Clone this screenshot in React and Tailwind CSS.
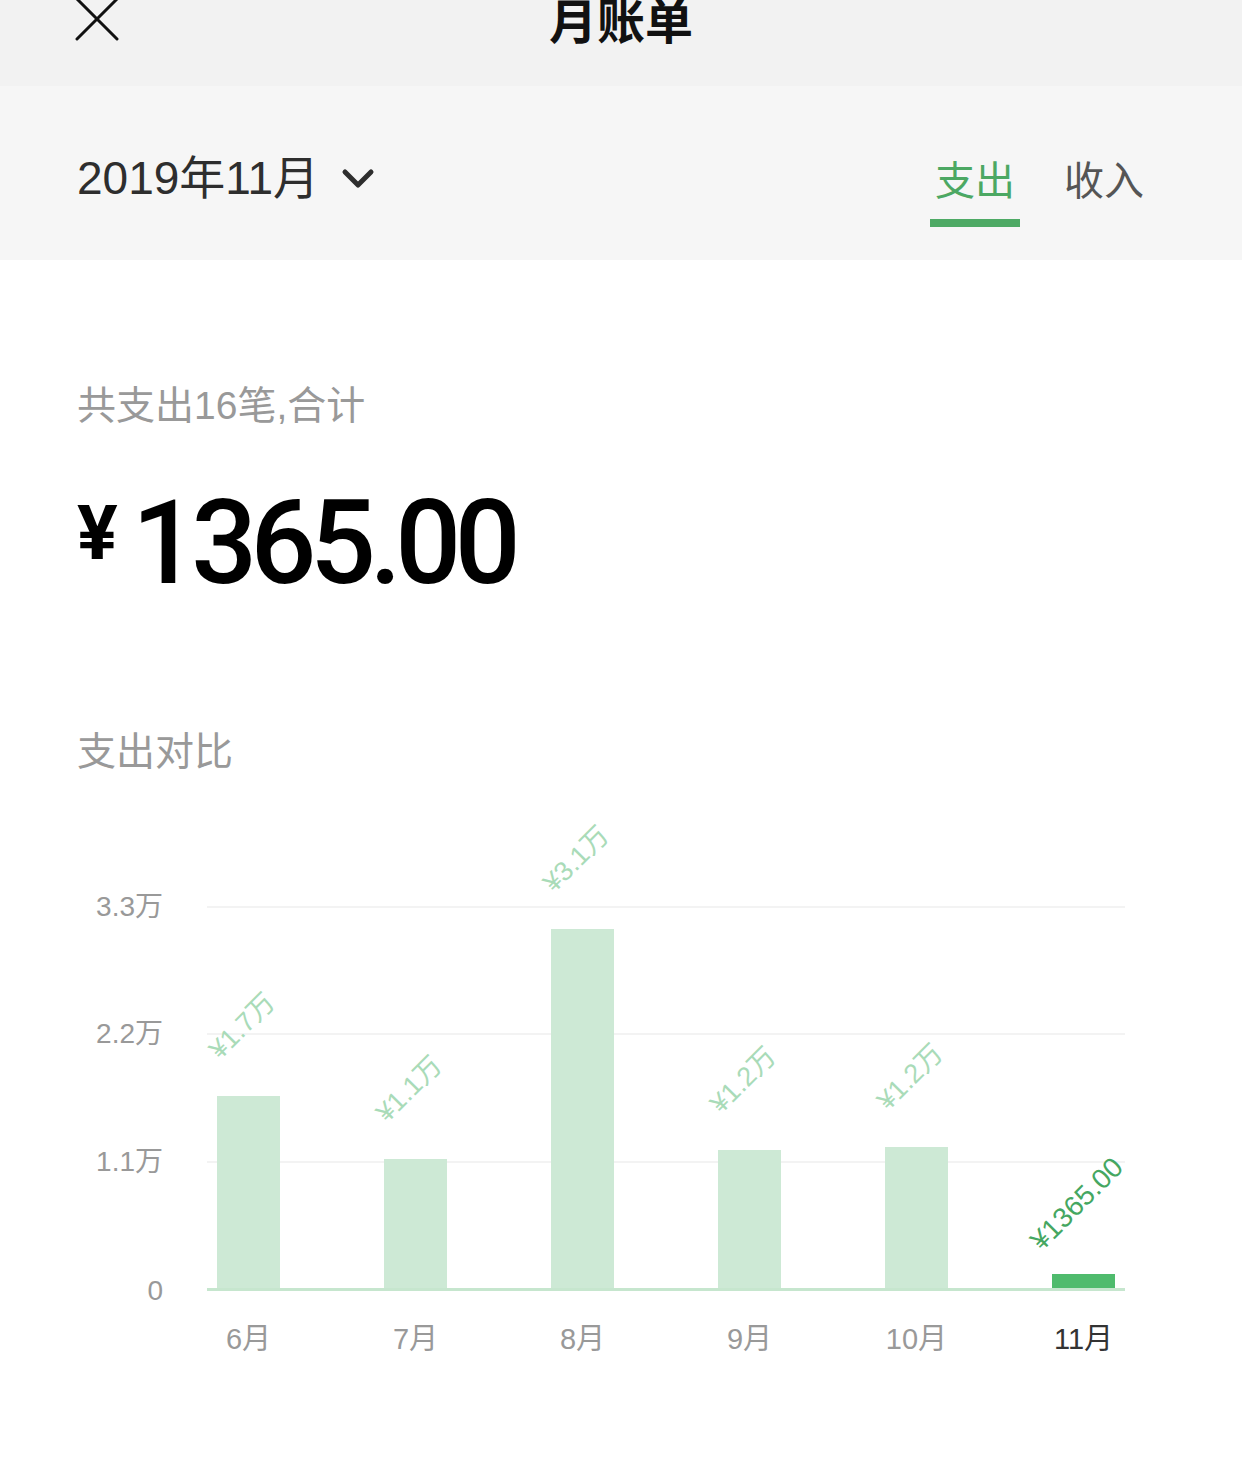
import React from "react";

const bars = [
  { m: "6月", left: 217, top: 322, label: "¥1.7万" },
  { m: "7月", left: 384, top: 385, label: "¥1.1万" },
  { m: "8月", left: 551, top: 155, label: "¥3.1万" },
  { m: "9月", left: 718, top: 376, label: "¥1.2万" },
  { m: "10月", left: 885, top: 373, label: "¥1.2万" },
  { m: "11月", left: 1052, top: 500, label: "¥1365.00", active: true },
];

const grid = [
  { y: 133, t: "3.3万" },
  { y: 260, t: "2.2万" },
  { y: 388, t: "1.1万" },
];

const BASE = 515;

export default function App() {
  const font = { fontFamily: '"Liberation Sans", "Noto Sans CJK SC", sans-serif' };
  return (
    <div className="w-[1242px] min-h-[1478px] bg-white overflow-hidden" style={font}>
      {/* top nav */}
      <div className="h-[86px] bg-[#f2f2f2] grid grid-cols-[1fr_auto_1fr] items-start">
        <div className="pl-[75px] -mt-[3px]">
          <svg width="44" height="44" viewBox="0 0 44 44" className="block">
            <path d="M2 2 L42 42 M42 2 L2 42" stroke="#111" strokeWidth="3" strokeLinecap="round" fill="none" />
          </svg>
        </div>
        <div className="text-[48px] leading-[40px] font-bold text-[#111] -mt-[2px]" style={{ fontFamily: '"Noto Sans CJK SC", sans-serif' }}>
          月账单
        </div>
        <div />
      </div>

      {/* filter bar */}
      <div className="h-[174px] bg-[#f6f6f6] flex items-start justify-between pl-[77px] pr-[93px] pt-[70px]">
        <div className="flex items-center gap-[22px]">
          <span className="text-[46px] leading-[44px] text-[#2e2e2e]">2019年11月</span>
          <svg width="34" height="24" viewBox="0 0 34 24" className="block mt-[2px]">
            <path d="M4 5 L17 18 L30 5" stroke="#2e2e2e" strokeWidth="5" fill="none" strokeLinecap="round" strokeLinejoin="round" />
          </svg>
        </div>
        <div className="flex gap-[39px]">
          <div className="w-[90px] flex flex-col items-center">
            <span className="text-[40px] leading-[44px] text-[#4ca863]" style={{ fontFamily: '"Noto Sans CJK SC", sans-serif' }}>支出</span>
            <div className="mt-[19px] w-[90px] h-[8px] bg-[#4eaa65]" />
          </div>
          <div className="w-[90px] flex flex-col items-center">
            <span className="text-[40px] leading-[44px] text-[#555]" style={{ fontFamily: '"Noto Sans CJK SC", sans-serif' }}>收入</span>
          </div>
        </div>
      </div>

      {/* summary */}
      <div className="pl-[77px]">
        <div className="mt-[124px] text-[39px] leading-[44px] text-[#999]">共支出16笔,合计</div>
        <div className="mt-[57px] flex items-start" style={{ fontFamily: 'Roboto, "Liberation Sans", sans-serif' }}>
          <span className="text-[76px] leading-[76px] font-bold text-black mt-[10px] mr-[14px]">¥</span>
          <span className="text-[116px] leading-[116px] font-medium text-black tracking-[-6.5px]">1365.00</span>
        </div>
        <div className="mt-[129px] text-[39px] leading-[44px] text-[#999]">支出对比</div>
      </div>

      {/* chart */}
      <div className="relative h-[620px]">
        {grid.map((g) => (
          <React.Fragment key={g.t}>
            <div className="absolute left-[207px] w-[918px] h-[2px] bg-[#f3f3f3]" style={{ top: g.y - 1 }} />
            <div className="absolute right-[1079px] text-[28px] leading-[30px] text-[#999] whitespace-nowrap" style={{ top: g.y - 15 }}>
              {g.t}
            </div>
          </React.Fragment>
        ))}
        <div className="absolute right-[1079px] text-[28px] leading-[30px] text-[#999]" style={{ top: BASE - 13 }}>
          0
        </div>
        {bars.map((b) => (
          <div
            key={b.m}
            className={`absolute w-[63px] ${b.active ? "bg-[#4fbb6d]" : "bg-[#cde9d5]"}`}
            style={{ left: b.left, top: b.top, height: BASE - b.top }}
          />
        ))}
        <div className="absolute left-[207px] w-[918px] h-[3px] bg-[#c6e6ce]" style={{ top: BASE - 1 }} />
        {bars.map((b) => (
          <div
            key={b.m + "l"}
            className={`absolute whitespace-nowrap leading-[30px] ${b.active ? "text-[28px] text-[#45a761] font-medium" : "text-[27px] text-[#a9dbb8]"}`}
            style={{
              left: b.left + 31.5 - 7,
              top: b.top - 70,
              transform: "translate(-50%, -50%) rotate(-45deg)",
              fontFamily: '"Liberation Sans", "Noto Sans CJK SC", sans-serif',
            }}
          >
            {b.label}
          </div>
        ))}
        {bars.map((b) => (
          <div
            key={b.m + "x"}
            className={`absolute text-[29px] leading-[32px] whitespace-nowrap ${b.active ? "text-[#333]" : "text-[#999]"}`}
            style={{ left: b.left + 31.5, top: 565 - 16, transform: "translateX(-50%)" }}
          >
            {b.m}
          </div>
        ))}
      </div>
    </div>
  );
}
